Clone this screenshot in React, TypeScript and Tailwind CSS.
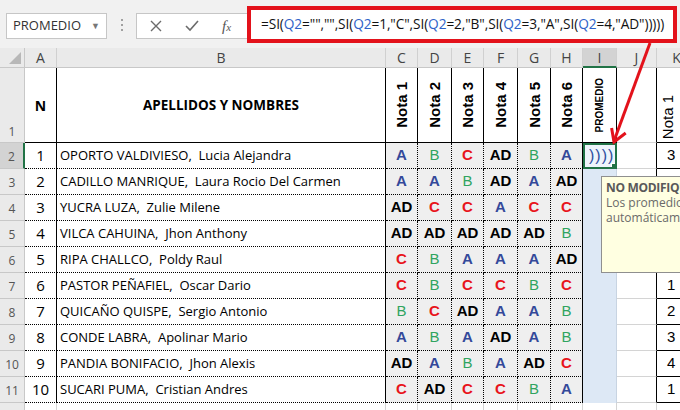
import React from "react";

type Grade = "A" | "B" | "C" | "AD";

const students: { n: number; last: string; first: string; grades: Grade[]; k: string }[] = [
  { n: 1, last: "OPORTO VALDIVIESO,", first: "Lucia Alejandra", grades: ["A", "B", "C", "AD", "B", "A"], k: "3" },
  { n: 2, last: "CADILLO MANRIQUE,", first: "Laura Rocio Del Carmen", grades: ["A", "A", "B", "AD", "A", "AD"], k: "" },
  { n: 3, last: "YUCRA LUZA,", first: "Zulie Milene", grades: ["AD", "C", "C", "A", "C", "C"], k: "" },
  { n: 4, last: "VILCA CAHUINA,", first: "Jhon Anthony", grades: ["AD", "AD", "AD", "AD", "AD", "B"], k: "" },
  { n: 5, last: "RIPA CHALLCO,", first: "Poldy Raul", grades: ["C", "B", "A", "A", "A", "AD"], k: "" },
  { n: 6, last: "PASTOR PEÑAFIEL,", first: "Oscar Dario", grades: ["C", "B", "C", "C", "B", "C"], k: "1" },
  { n: 7, last: "QUICAÑO QUISPE,", first: "Sergio Antonio", grades: ["B", "C", "AD", "A", "A", "B"], k: "2" },
  { n: 8, last: "CONDE LABRA,", first: "Apolinar Mario", grades: ["A", "B", "A", "AD", "A", "B"], k: "3" },
  { n: 9, last: "PANDIA BONIFACIO,", first: "Jhon Alexis", grades: ["AD", "A", "B", "A", "AD", "C"], k: "4" },
  { n: 10, last: "SUCARI PUMA,", first: "Cristian Andres", grades: ["C", "AD", "C", "C", "B", "A"], k: "1" },
];

const gradeClass: Record<Grade, string> = {
  A: "text-[#34499a] font-bold",
  B: "text-[#2fa460] font-normal",
  C: "text-[#e8141b] font-bold",
  AD: "text-black font-bold",
};

const cols = "grid grid-cols-[25px_32px_329px_32px_34px_32px_34px_33px_32px_34px_40px_40px]";
const letters = ["A", "B", "C", "D", "E", "F", "G", "H", "I", "J", "K"];

function Q2() {
  return <span className="text-[#2f62c8]">Q2</span>;
}

export default function App() {
  return (
    <div className="relative w-[680px] h-[410px] overflow-hidden bg-white font-['Open_Sans',sans-serif] text-black">
      {/* Formula bar */}
      <div className="h-[48px] bg-[#f1f1f1] flex items-start">
        <div className="mt-[13px] ml-[6px] w-[101px] h-[26px] bg-white border border-[#c6c6c6] flex items-center justify-between pl-[6px] pr-[6px]">
          <span className="text-[13px] text-[#333]">PROMEDIO</span>
          <span className="text-[9px] text-[#777]">▼</span>
        </div>
        <div className="mt-[19px] ml-[14px] flex flex-col gap-[3px]">
          <span className="w-[2px] h-[2px] bg-[#a0a0a0]" />
          <span className="w-[2px] h-[2px] bg-[#a0a0a0]" />
          <span className="w-[2px] h-[2px] bg-[#a0a0a0]" />
        </div>
        <div className="mt-[13px] ml-[13px] w-[111px] h-[26px] bg-white border border-[#c6c6c6] border-r-0 flex items-center text-[#6b6b6b]">
          <svg className="ml-[13px]" width="12" height="12" viewBox="0 0 12 12">
            <path d="M1 1 L11 11 M11 1 L1 11" stroke="#6b6b6b" strokeWidth="1.4" fill="none" />
          </svg>
          <svg className="ml-[23px]" width="14" height="12" viewBox="0 0 14 12">
            <path d="M1 6 L5 10 L13 1" stroke="#6b6b6b" strokeWidth="1.6" fill="none" />
          </svg>
          <span className="ml-[23px] font-['Liberation_Serif',serif] italic text-[15px] text-[#555] leading-none">
            f<span className="text-[11px]">x</span>
          </span>
        </div>
        <div className="mt-[6px] w-[430px] h-[37px] border-[4px] border-[#e3121b] bg-white flex items-center pl-[10px] whitespace-nowrap overflow-hidden">
          <span className="text-[13.7px] tracking-[-0.1px] text-[#111]">
            =SI(<Q2 />="","",SI(<Q2 />=1,"C",SI(<Q2 />=2,"B",SI(<Q2 />=3,"A",SI(<Q2 />=4,"AD")))))
          </span>
        </div>
      </div>

      {/* Column headers */}
      <div className={cols}>
        <div className="h-[20px] bg-[#eaeaea] border-r border-b border-[#c8c8c8] relative">
          <div className="absolute right-[3px] bottom-[3px] w-0 h-0 border-l-[12px] border-l-transparent border-b-[12px] border-b-[#b8b8b8]" />
        </div>
        {letters.map((l) => (
          <div
            key={l}
            className={`h-[20px] flex items-center justify-center text-[14px] text-[#444] border-r border-[#d0d0d0] ${
              l === "I" ? "bg-[#d3d3d3] border-b-2 border-b-[#217346]" : "bg-[#eaeaea] border-b border-b-[#c8c8c8]"
            }`}
          >
            {l}
          </div>
        ))}
      </div>

      {/* Row 1 */}
      <div className={cols}>
        <div className="h-[75px] bg-[#eaeaea] border-r border-b border-[#c8c8c8] flex items-end justify-center pb-[1px] text-[12px] text-[#555]">
          1
        </div>
        <div className="h-[75px] border-r border-b border-black flex items-center justify-center font-bold text-[14px]">N</div>
        <div className="h-[75px] border-r border-b border-black flex items-center justify-center font-bold text-[13.5px]">
          APELLIDOS Y NOMBRES
        </div>
        {[1, 2, 3, 4, 5, 6].map((i) => (
          <div key={i} className="h-[75px] border-r border-b border-black flex items-center justify-center">
            <span className="[writing-mode:vertical-rl] rotate-180 font-['Liberation_Sans',sans-serif] font-bold text-[15px] leading-none">
              Nota {i}
            </span>
          </div>
        ))}
        <div className="h-[75px] border-r border-b border-black flex items-center justify-center">
          <span className="[writing-mode:vertical-rl] rotate-180 font-['Liberation_Sans',sans-serif] font-bold text-[10px] leading-none">
            PROMEDIO
          </span>
        </div>
        <div className="h-[75px] border-r border-black border-b border-b-[#d4d4d4]" />
        <div className="h-[75px] border-b border-black flex items-end justify-start pl-[3px] pb-[3px]">
          <span className="[writing-mode:vertical-rl] rotate-180 font-['Liberation_Sans',sans-serif] text-[15px] leading-none">
            Nota 1
          </span>
        </div>
      </div>

      {/* Data rows */}
      {students.map((s, r) => (
        <div key={s.n} className={cols}>
          <div
            className={`h-[26px] border-b border-[#c8c8c8] flex items-end justify-center pb-[2px] text-[12px] text-[#555] ${
              r === 0 ? "bg-[#d3d3d3] border-r-2 border-r-[#217346]" : "bg-[#eaeaea] border-r"
            }`}
          >
            {r + 2}
          </div>
          <div className="h-[26px] border-r border-b border-black border-dotted [border-right-style:solid] flex items-center justify-center text-[15px]">
            {s.n}
          </div>
          <div className="h-[26px] border-r border-b border-black border-dotted [border-right-style:solid] flex items-center pl-[3px] text-[13px] whitespace-nowrap">
            {s.last}&nbsp;&nbsp;{s.first}
          </div>
          {s.grades.map((g, i) => (
            <div
              key={i}
              className={`h-[26px] bg-[#efefef] border-r border-b border-black border-dotted flex items-center justify-center font-['Liberation_Sans',sans-serif] text-[15px] ${
                i === 5 ? "[border-right-style:solid]" : ""
              } ${gradeClass[g]}`}
            >
              {g}
            </div>
          ))}
          {r === 0 ? (
            <div className="h-[26px] bg-[#eef4fb] border-2 border-[#217346] relative flex items-center pl-[4px] overflow-hidden">
              <span className="text-[16px] text-[#2f4fa0] font-['Liberation_Sans',sans-serif] leading-none tracking-[1px]">))))</span>
              <div className="absolute right-[-1px] bottom-[-1px] w-[5px] h-[5px] bg-[#217346] border border-white" />
            </div>
          ) : (
            <div className="h-[26px] bg-[#dde8f5] border-r border-[#c8d4e2]" />
          )}
          <div className="h-[26px] border-r border-r-black border-b border-b-[#d4d4d4]" />
          <div className="h-[26px] border-b border-black flex items-center pl-[10px] font-['Liberation_Sans',sans-serif] text-[15px]">
            {s.k}
          </div>
        </div>
      ))}

      {/* Row 12 */}
      <div className={cols}>
        <div className="h-[26px] bg-[#eaeaea] border-r border-b border-[#c8c8c8]" />
        {letters.map((l) => (
          <div key={l} className="h-[26px] border-r border-b border-[#d4d4d4]" />
        ))}
      </div>

      {/* Comment box */}
      <div className="absolute left-[601px] top-[176px] w-[110px] h-[97px] bg-[#ffffe1] border border-[#8f8f8f] pl-[4px] pt-[3px] text-[12px] leading-[15px] whitespace-nowrap overflow-hidden">
        <div className="font-bold text-[#595959] tracking-[-0.3px]">NO MODIFIQUE</div>
        <div className="text-[#6a6a6a]">Los promedios</div>
        <div className="text-[#6a6a6a]">automáticamente</div>
      </div>

      {/* Red arrow */}
      <svg className="absolute left-0 top-0 pointer-events-none" width="680" height="410" viewBox="0 0 680 410">
        <path d="M650 43 L614 141" stroke="#e3121b" strokeWidth="3" fill="none" />
        <path d="M611.6 128 L614 142 L625.7 133" stroke="#e3121b" strokeWidth="3" fill="none" strokeLinejoin="miter" />
      </svg>
    </div>
  );
}
